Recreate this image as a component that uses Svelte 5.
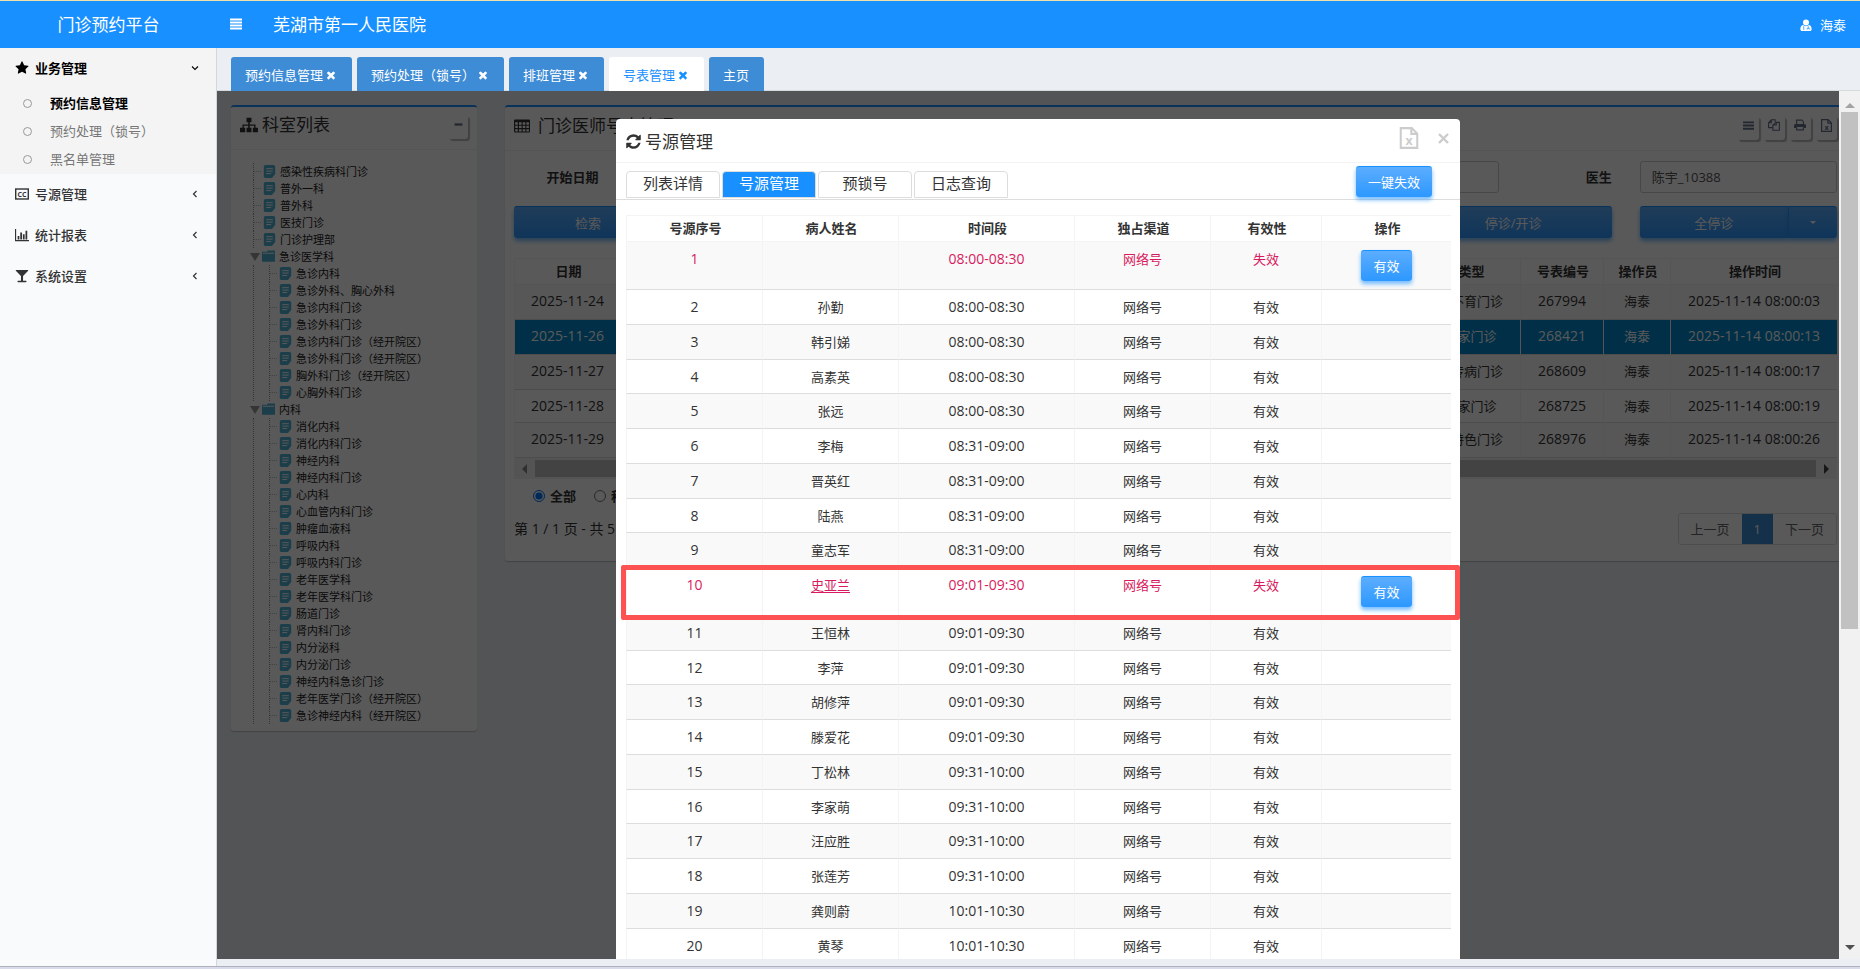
<script lang="ts">
  type Slot = { no: number; name: string; time: string; channel: string; invalid?: boolean; marked?: boolean };

  const openTabs = [
    { label: '预约信息管理', closable: true },
    { label: '预约处理（锁号）', closable: true },
    { label: '排班管理', closable: true },
    { label: '号表管理', closable: true },
    { label: '主页', closable: false }
  ];
  let currentTab = $state('号表管理');

  const subMenu = ['预约信息管理', '预约处理（锁号）', '黑名单管理'];
  const menus = [
    { icon: 'cc', label: '号源管理' },
    { icon: 'chart', label: '统计报表' },
    { icon: 'glass', label: '系统设置' }
  ];

  const tree: { name: string; children?: string[] }[] = [
    { name: '感染性疾病科门诊' },
    { name: '普外一科' },
    { name: '普外科' },
    { name: '医技门诊' },
    { name: '门诊护理部' },
    {
      name: '急诊医学科',
      children: ['急诊内科', '急诊外科、胸心外科', '急诊内科门诊', '急诊外科门诊', '急诊内科门诊（经开院区）', '急诊外科门诊（经开院区）', '胸外科门诊（经开院区）', '心胸外科门诊']
    },
    {
      name: '内科',
      children: ['消化内科', '消化内科门诊', '神经内科', '神经内科门诊', '心内科', '心血管内科门诊', '肿瘤血液科', '呼吸内科', '呼吸内科门诊', '老年医学科', '老年医学科门诊', '肠道门诊', '肾内科门诊', '内分泌科', '内分泌门诊', '神经内科急诊门诊', '老年医学门诊（经开院区）', '急诊神经内科（经开院区）']
    }
  ];

  const schedules = [
    { date: '2025-11-24', type: '男不育门诊', code: '267994', time: '2025-11-14 08:00:03' },
    { date: '2025-11-26', type: '专家门诊', code: '268421', time: '2025-11-14 08:00:13' },
    { date: '2025-11-27', type: '遗传病门诊', code: '268609', time: '2025-11-14 08:00:17' },
    { date: '2025-11-28', type: '专家门诊', code: '268725', time: '2025-11-14 08:00:19' },
    { date: '2025-11-29', type: '科特色门诊', code: '268976', time: '2025-11-14 08:00:26' }
  ];
  let selected = $state('268421');

  const people = ['', '孙勤', '韩引娣', '高素英', '张远', '李梅', '晋英红', '陆燕', '童志军', '史亚兰', '王恒林', '李萍', '胡修萍', '滕爱花', '丁松林', '李家萌', '汪应胜', '张莲芳', '龚则蔚', '黄琴'];
  const periods: [number, string][] = [
    [5, '08:00-08:30'],
    [9, '08:31-09:00'],
    [14, '09:01-09:30'],
    [18, '09:31-10:00'],
    [20, '10:01-10:30']
  ];
  const slots: Slot[] = people.map((name, i) => ({
    no: i + 1,
    name,
    time: periods.find(([last]) => i + 1 <= last)![1],
    channel: '网络号',
    invalid: i === 0 || i === 9,
    marked: i === 9
  }));

  const modalTabs = ['列表详情', '号源管理', '预锁号', '日志查询'];
  let modalTab = $state('号源管理');
</script>

{#snippet icon(name: string, size: number)}
  <svg class="icon" width={size} height={size} viewBox="0 0 16 16" fill="currentColor" aria-hidden="true">
    {#if name === 'bars'}
      <path d="M0 .6h16v2.800H0zM0 4.600h16v2.800H0zM0 8.600h16v2.800H0zM0 12.600h16v2.800H0z" />
    {:else if name === 'list'}
      <path d="M0 2h16v2.600H0zM0 6.700h16v2.600H0zM0 11.400h16v2.600H0z" />
    {:else if name === 'user'}
      <circle cx="8" cy="4.500" r="4" />
      <path d="M4 8C1.500 8.500.5 11 .5 13.500c0 1.500 1 2.500 2.500 2.500h10c1.500 0 2.500-1 2.500-2.500C15.500 11 14.500 8.500 12 8c-2 2-6 2-8 0z" />
      <path d="M5 9.500v5M11 9.500v3M9.500 14v-1.500h3V14" fill="none" stroke="#1890ff" />
    {:else if name === 'star'}
      <path transform="scale(.00893)" d="M1728 647q0 22-26 48l-363 354 86 500q1 7 1 20 0 21-10.500 35.500t-30.500 14.500q-19 0-40-12l-449-236-449 236q-22 12-40 12-21 0-31.500-14.500t-10.500-35.500q0-6 2-20l86-500-364-354q-25-27-25-48 0-37 56-46l502-73 225-455q19-41 49-41t49 41l225 455 502 73q56 9 56 46z" />
    {:else if name === 'cc'}
      <rect x=".8" y="2.300" width="14.400" height="11.400" fill="none" stroke="currentColor" stroke-width="1.600" />
      <text x="8" y="11" font-size="8" font-weight="700" text-anchor="middle">CC</text>
    {:else if name === 'chart'}
      <path d="M0 1h1.300v12.700H16V15H0zM3 9h2v4H3zM6 5h2v8H6zM9 7h2v6H9zM12 3h2v10h-2z" />
    {:else if name === 'glass'}
      <path d="M1.500 1h13c.8 0 .8.800.3 1.300L9.200 8v5.500h3.300c1 0 1 1.500 0 1.500h-9c-1 0-1-1.500 0-1.500h3.300V8L1.200 2.300C.7 1.800.7 1 1.500 1z" />
    {:else if name === 'down'}
      <path d="M2 5l6 6 6-6" fill="none" stroke="currentColor" stroke-width="2.200" />
    {:else if name === 'left'}
      <path d="M11 2L5 8l6 6" fill="none" stroke="currentColor" stroke-width="2.400" />
    {:else if name === 'times'}
      <path transform="scale(.00893)" d="M1490 1322q0 40-28 68l-136 136q-28 28-68 28t-68-28l-294-294-294 294q-28 28-68 28t-68-28l-136-136q-28-28-28-68t28-68l294-294-294-294q-28-28-28-68t28-68l136-136q28-28 68-28t68 28l294 294 294-294q28-28 68-28t68 28l136 136q28 28 28 68t-28 68l-294 294 294 294q28 28 28 68z" />
    {:else if name === 'sitemap'}
      <path d="M5.800 1.500h4.400v4H8.700v2h5.100v3H16v4h-4.600v-4h1.200V8.700H8.700v1.800h1.500v4H5.800v-4h1.500V8.700H3.400v1.800h1.200v4H0v-4h2.200v-3h5.100v-2H5.800z" />
    {:else if name === 'table'}
      <path fill-rule="evenodd" d="M1 1.500h14q1 0 1 1v11q0 1-1 1H1q-1 0-1-1v-11q0-1 1-1zM1.200 4.300v2.400h2.600V4.300zM5 4.300v2.400h2.600V4.300zM8.700 4.300v2.400h2.600V4.300zM12.400 4.300v2.400h2.500V4.300zM1.200 7.800v2.300h2.600V7.800zM5 7.800v2.300h2.600V7.800zM8.700 7.800v2.300h2.600V7.800zM12.400 7.800v2.300h2.500V7.800zM1.200 11.200v2.200h2.600v-2.200zM5 11.200v2.200h2.600v-2.200zM8.700 11.200v2.200h2.600v-2.200zM12.400 11.200v2.200h2.500v-2.200z" />
    {:else if name === 'minus'}
      <path d="M1 6h14v4H1z" />
    {:else if name === 'copy'}
      <path d="M6 11.500H.8V5L4.500 1h5v3M4.500 1v4H.8M11 4.500h4.200V15H6.500V8zM11 4.500V8H6.500" fill="none" stroke="currentColor" stroke-width="1.500" />
    {:else if name === 'print'}
      <path d="M3.500 7V1.500h7l2 2V7M3.500 11v3.500h9V11" fill="none" stroke="currentColor" stroke-width="1.500" />
      <path d="M2 6.500h12q2 0 2 2V12h-3v-1.500H3V12H0V8.500q0-2 2-2z" />
    {:else if name === 'excel'}
      <path d="M2 .8h8L14 4.800v10.400H2zM9.700.8v4.200H14" fill="none" stroke="currentColor" stroke-width="1.500" />
      <text x="8" y="13" font-size="9" font-weight="700" text-anchor="middle">x</text>
    {:else if name === 'refresh'}
      <path transform="scale(.00893)" d="M1639 1056q0 5-1 7-64 268-268 434.500t-478 166.500q-146 0-282.500-55t-243.500-157l-129 129q-19 19-45 19t-45-19-19-45v-448q0-26 19-45t45-19h448q26 0 45 19t19 45-19 45l-137 137q71 66 161 102t187 36q134 0 250-65t186-179q11-17 53-117 8-23 30-23h192q13 0 22.500 9.500t9.500 22.500zm25-800v448q0 26-19 45t-45 19h-448q-26 0-45-19t-19-45 19-45l138-138q-148-137-349-137-134 0-250 65t-186 179q-11 17-53 117-8 23-30 23h-199q-13 0-22.500-9.500t-9.500-22.500v-7q65-268 270-434.500t480-166.500q146 0 284 55.500t245 156.500l130-129q19-19 45-19t45 19 19 45z" />
    {:else if name === 'file'}
      <path d="M3 0h10q2 0 2 2v9l-4 5H3q-2 0-2-2V2q0-2 2-2z" />
      <path d="M4 4.500h8M4 7.500h8M4 10.500h6" stroke="#fff" stroke-width="1.200" />
    {:else if name === 'folder'}
      <path d="M0 2h6l1-1.500h9V14.500H0z" />
      <path d="M1 4h14" stroke="#fff" stroke-width="1.200" />
    {/if}
  </svg>
{/snippet}

{#snippet leaf(name: string)}
  <li><a href="#dept" class="node"><i class="branch"></i><span class="leaf-icon">{@render icon('file', 13)}</span>{name}</a></li>
{/snippet}

<div class="app">
  <header>
    <a href="#home" class="brand">门诊预约平台</a>
    <button class="toggle" aria-label="折叠菜单">{@render icon('bars', 12)}</button>
    <span class="hospital">芜湖市第一人民医院</span>
    <a href="#user" class="user">{@render icon('user', 12)}海泰</a>
  </header>

  <div class="body">
    <aside>
      <nav>
        <section class="group open">
          <button class="group-head">{@render icon('star', 14)}<span>业务管理</span>{@render icon('down', 8)}</button>
          <ul>
            {#each subMenu as item, i}
              <li><a href="#menu" class:active={i === 0}><i class="dot"></i>{item}</a></li>
            {/each}
          </ul>
        </section>
        {#each menus as m}
          <section class="group">
            <button class="group-head">{@render icon(m.icon, 14)}<span>{m.label}</span>{@render icon('left', 8)}</button>
          </section>
        {/each}
      </nav>
    </aside>

    <main>
      <div class="tabs">
        {#each openTabs as t}
          <button class="tab" class:active={currentTab === t.label} onclick={() => (currentTab = t.label)}>
            {t.label}{#if t.closable}{@render icon('times', 12)}{/if}
          </button>
        {/each}
      </div>

      <div class="viewport">
        <div class="page">
          <section class="panel depts">
            <div class="panel-head">
              {@render icon('sitemap', 18)}
              <h2>科室列表</h2>
              <div class="tools"><button aria-label="收起">{@render icon('minus', 9)}</button></div>
            </div>
            <ul class="tree">
              {#each tree as node}
                {#if node.children}
                  <li>
                    <a href="#dept" class="node"><i class="arrow"></i>{@render icon('folder', 13)}{node.name}</a>
                    <ul>
                      {#each node.children as child}{@render leaf(child)}{/each}
                    </ul>
                  </li>
                {:else}
                  {@render leaf(node.name)}
                {/if}
              {/each}
            </ul>
          </section>

          <section class="panel work">
            <div class="panel-head">
              {@render icon('table', 16)}
              <h2>门诊医师号表管理</h2>
              <div class="tools">
                <button aria-label="列表">{@render icon('list', 11)}</button>
                <button aria-label="复制">{@render icon('copy', 12)}</button>
                <button aria-label="打印">{@render icon('print', 12)}</button>
                <button aria-label="导出">{@render icon('excel', 13)}</button>
              </div>
            </div>
            <div class="work-body">
              <div class="filters">
                <label for="start">开始日期</label><input id="start" value="2025-11-14" />
                <label for="end">结束日期</label><input id="end" value="2025-11-30" />
                <label for="dept">科室</label><input id="dept" value="" />
                <label for="doctor">医生</label><input id="doctor" value="陈宇_10388" />
              </div>
              <div class="actions">
                <div class="split"><button class="btn">检索</button><button class="btn caret" aria-label="更多"></button></div>
                <button class="btn stop">停诊/开诊</button>
                <div class="split"><button class="btn">全停诊</button><button class="btn caret" aria-label="更多"></button></div>
              </div>

              <table class="schedule">
                <colgroup><col class="c-date" /><col /><col class="c-type" /><col class="c-code" /><col class="c-op" /><col class="c-time" /></colgroup>
                <thead>
                  <tr><th>日期</th><th></th><th>类型</th><th>号表编号</th><th>操作员</th><th>操作时间</th></tr>
                </thead>
                <tbody>
                  {#each schedules as s}
                    <tr class:selected={selected === s.code} onclick={() => (selected = s.code)}>
                      <td class="num">{s.date}</td>
                      <td></td>
                      <td>{s.type}</td>
                      <td class="num">{s.code}</td>
                      <td>海泰</td>
                      <td class="num">{s.time}</td>
                    </tr>
                  {/each}
                </tbody>
              </table>
              <div class="hscroll"><i class="tri-left"></i><span></span><i class="tri-right"></i></div>

              <div class="radios">
                <label><input type="radio" name="kind" checked />全部</label>
                <label><input type="radio" name="kind" />科室</label>
              </div>
              <div class="pager">
                <span class="num">第 1 / 1 页 - 共 5 条</span>
                <div class="pages"><button>上一页</button><button class="current">1</button><button>下一页</button></div>
              </div>
            </div>
          </section>
        </div>

        <div class="overlay">
          <div class="modal" role="dialog" aria-label="号源管理">
            <div class="modal-head">
              {@render icon('refresh', 17)}
              <h2>号源管理</h2>
              <button class="export" aria-label="导出">{@render icon('excel', 22)}</button>
              <button class="close" aria-label="关闭">
                <svg width="11" height="11" viewBox="0 0 11 11"><path d="M1 1l9 9M10 1l-9 9" stroke="currentColor" stroke-width="2.400" /></svg>
              </button>
            </div>
            <div class="modal-bar">
              {#each modalTabs as t}
                <button class="modal-tab" class:active={modalTab === t} onclick={() => (modalTab = t)}>{t}</button>
              {/each}
              <button class="btn small void-all">一键失效</button>
            </div>
            <table class="slots">
              <colgroup><col class="w1" /><col class="w1" /><col class="w2" /><col class="w1" /><col class="w3" /><col class="w4" /></colgroup>
              <thead>
                <tr><th>号源序号</th><th>病人姓名</th><th>时间段</th><th>独占渠道</th><th>有效性</th><th>操作</th></tr>
              </thead>
              <tbody>
                {#each slots as s}
                  <tr class:invalid={s.invalid} class:marked={s.marked}>
                    <td class="num">{s.no}</td>
                    <td>{#if s.marked}<a href="#patient">{s.name}</a>{:else}{s.name}{/if}</td>
                    <td class="num">{s.time}</td>
                    <td>{s.channel}</td>
                    <td>{s.invalid ? '失效' : '有效'}</td>
                    <td>{#if s.invalid}<button class="btn small">有效</button>{/if}</td>
                  </tr>
                {/each}
              </tbody>
            </table>
          </div>
        </div>

        <div class="vscroll"><i class="tri-up"></i><span></span><i class="tri-down"></i></div>
      </div>
    </main>
  </div>
  <footer></footer>
</div>

<style>
  .app {
    box-sizing: border-box;
    height: 100vh;
    display: flex;
    flex-direction: column;
    border-top: 1px solid #f0dfa6;
    background: #ebeff4;
    color: #333;
    font: 13px/18px "Open Sans", "Noto Sans CJK SC", sans-serif;
  }
  .app :global(*) { box-sizing: border-box; }
  button, input { font: inherit; color: inherit; }
  button { border: 0; background: none; padding: 0; cursor: pointer; }
  a { color: inherit; text-decoration: none; }
  ul { list-style: none; margin: 0; padding: 0; }
  h2 { margin: 0; font-size: 17px; font-weight: 400; line-height: 24px; }
  .icon { flex: none; display: block; }

  header {
    flex: none;
    height: 47px;
    display: flex;
    align-items: center;
    background: #1890ff;
    color: #fff;
    font-size: 17px;
  }
  .brand { width: 217px; text-align: center; }
  .toggle { padding: 0 12px 2px 13px; }
  .hospital { margin-left: 19px; }
  .user { margin-left: auto; margin-right: 14px; display: flex; align-items: center; gap: 8px; font-size: 13px; }

  .body { flex: 1; min-height: 0; display: flex; }
  aside { flex: none; width: 217px; background: #f9fafc; border-right: 1px solid #d2d6de; }
  .group-head {
    width: 100%;
    height: 41px;
    padding: 0 17px 2px 15px;
    display: flex;
    align-items: center;
    gap: 6px;
    color: #333;
    font-weight: 500;
    text-align: left;
  }
  .group-head span { flex: 1; }
  .open { background: #f4f4f4; padding-bottom: 1px; }
  .open .group-head { color: #000; font-weight: 700; }
  .group li a { display: flex; align-items: center; height: 28px; padding-left: 23px; color: #777; }
  .group li a.active { color: #000; font-weight: 700; }
  .dot { width: 9px; height: 9px; margin-right: 18px; border: 1px solid #999; border-radius: 50%; }

  main { flex: 1; min-width: 0; display: flex; flex-direction: column; padding-bottom: 7px; }
  .tabs { flex: none; height: 43px; padding: 9px 14px 0; display: flex; gap: 5px; border-bottom: 1px solid #d5dadd; }
  .tab {
    display: flex;
    align-items: center;
    gap: 2px;
    height: 34px;
    padding: 2px 15px 0 14px;
    border-radius: 3px 3px 0 0;
    background: #3e8cd5;
    color: #fff;
  }
  .tab.active { background: #fff; color: #1890ff; }

  .viewport { position: relative; flex: 1; min-height: 0; overflow: hidden; }
  .page { display: flex; align-items: flex-start; gap: 28px; padding: 14px; }
  .panel { background: #fff; border-top: 2px solid #1890ff; border-radius: 3px; box-shadow: 0 1px 1px rgba(0, 0, 0, 0.2); }
  .depts { flex: none; width: 246px; }
  .work { flex: 1; min-width: 0; }
  .panel-head { display: flex; align-items: center; gap: 4px; height: 43px; padding: 0 9px 6px; border-bottom: 1px solid #f0f0f0; }
  .work .panel-head { height: 44px; gap: 8px; }
  .tools { margin-left: auto; display: flex; gap: 4px; }
  .tools button {
    width: 20px;
    height: 24px;
    margin-top: 4px;
    padding: 0 0 5px;
    display: grid;
    place-items: center;
    color: #66728a;
    border-radius: 3px;
    box-shadow: 2px 2px 1px #bbb;
  }
  .work .tools button { width: 22px; }

  .tree { padding: 13px 0 7px 19px; font-size: 11px; line-height: 17px; color: #222; }
  .tree ul { margin-left: 3px; padding-left: 12px; border-left: 1px dotted #999; }
  .node { display: flex; align-items: center; height: 17px; gap: 4px; }
  .node :global(.icon) { color: #4fb3d4; }
  .branch { width: 11px; height: 17px; margin-left: 3px; border-left: 1px dotted #999; background: repeating-linear-gradient(90deg, #bbb 0 1px, transparent 1px 2px) 0 8px / 8px 1px no-repeat; }
  .leaf-icon { margin-left: -5px; }
  .arrow { width: 0; border: 5px solid transparent; border-top: 8px solid #999; border-bottom: 0; margin-right: -2px; }

  .work-body { padding: 10px 9px 16px; }
  .filters { display: grid; grid-template-columns: repeat(12, minmax(0, 1fr)); gap: 28px; align-items: center; }
  .filters label { text-align: right; font-weight: 700; }
  .filters input { grid-column: span 2; width: 100%; height: 32px; padding: 0 11px 2px; border: 1px solid #ccc; border-radius: 3px; background: #fff; color: #555; }
  .actions { display: grid; grid-template-columns: repeat(6, minmax(0, 1fr)); gap: 28px; padding: 13px 0 20px; }
  .stop { grid-column: 5; }
  .split { display: grid; grid-template-columns: 3fr 1fr; }
  .split .btn:first-child { border-radius: 3px 0 0 3px; }
  .split .caret { border-radius: 0 3px 3px 0; border-left: 1px solid #2f93f5; display: grid; place-items: center; }
  .caret::after { content: ''; border: 3px solid transparent; border-top-color: #fff; border-bottom: 0; }
  .btn {
    height: 32px;
    color: #fff;
    border-top: 1px solid #1890ff;
    border-radius: 3px;
    background: linear-gradient(#5cadff, #2d98ff);
    box-shadow: 0 3px 4px rgba(24, 144, 255, 0.6);
  }
  .small { height: 31px; padding: 0 12px; }

  table { width: 100%; border-collapse: separate; border-spacing: 0; table-layout: fixed; }
  th, td { text-align: center; vertical-align: top; }
  th { height: 27px; padding: 3px 0 4px 2px; border-top: 1px solid #f4f4f4; border-left: 1px solid #f4f4f4; border-bottom: 1px solid #f4f4f4; font-weight: 700; }
  td { padding: 8px 0; border-left: 1px solid #f4f4f4; border-bottom: 1px solid #ddd; }
  tbody tr:nth-child(odd) { background: #f9f9f9; }
  tbody tr:nth-child(4n + 4) td { padding-bottom: 7px; }
  .num { font-size: 14px; }
  .c-date { width: 106px; }
  .c-type { width: 100px; }
  .c-code { width: 83px; }
  .c-op { width: 67px; }
  .c-time { width: 167px; }
  .schedule td { padding-top: 7px; }
  tbody tr.selected { background: #0088cc; color: #fff; }
  .schedule td { padding-bottom: 9px; }
  .hscroll { display: flex; align-items: center; gap: 8px; height: 21px; padding: 0 8px; background: #f1f1f1; }
  .hscroll span { flex: 1; height: 17px; background: #c1c1c1; }
  .tri-left, .tri-right { border: 5px solid transparent; }
  .tri-left { border-right-color: #888; border-left: 0; }
  .tri-right { border-left-color: #444; border-right: 0; }
  .radios { display: flex; gap: 18px; padding: 8px 0; padding-left: 19px; font-weight: 700; }
  .radios label { display: flex; align-items: center; gap: 5px; }
  .radios input { width: 12px; height: 12px; margin: 0; }
  .pager { display: flex; justify-content: space-between; align-items: center; }
  .pages { display: flex; border: 1px solid #ddd; border-radius: 3px; }
  .pages button { height: 30px; padding: 0 12px; color: #666; }
  .pages .current { background: #3e8cd5; color: #fff; }

  .overlay { position: absolute; inset: 0; display: flex; justify-content: center; align-items: flex-start; padding: 28px 1px 0 0; background: rgba(0, 0, 0, 0.65); }
  .modal { width: 844px; background: #fff; border-radius: 4px; padding-bottom: 20px; }
  .modal-head { display: flex; align-items: center; height: 44px; padding: 2px 11px 0 9px; border-bottom: 1px solid #f4f4f4; }
  .modal-head h2 { margin-left: 3px; }
  .export { margin: 0 18px 8px auto; color: #ccc; }
  .close { display: grid; color: #ccc; margin-bottom: 6px; }
  .modal-bar { display: flex; align-items: flex-end; gap: 2px; height: 37px; padding: 0 28px 1px 10px; border-bottom: 1px solid #ddd; }
  .modal-tab { width: 94px; height: 27px; padding-bottom: 4px; border: 1px solid #ddd; border-radius: 4px 4px 0 0; font-size: 15px; line-height: 20px; }
  .modal-tab.active { background: #1890ff; color: #fff; }
  .void-all { margin-left: auto; margin-bottom: 1px; }
  .slots { width: auto; margin: 15px 9px 0 10px; min-width: calc(100% - 19px); }
  .w1 { width: 136px; }
  .w2 { width: 176px; }
  .w3 { width: 111px; }
  .w4 { width: 130px; }
  .invalid { color: #d81b60; }
  .invalid a { text-decoration: underline; text-underline-offset: 2px; }
  .marked { position: relative; }
  .marked::after { content: ''; position: absolute; inset: -3px -9px -4px -5px; border: 5px solid #fd5252; border-radius: 2px; pointer-events: none; }

  .vscroll { position: absolute; inset: 0 0 0 auto; width: 21px; display: flex; flex-direction: column; align-items: center; padding: 12px 0 9px; background: #f1f1f1; }
  .vscroll span { width: 17px; height: 61%; margin-top: 4px; background: #c1c1c1; }
  .tri-up, .tri-down { border: 5px solid transparent; }
  .tri-up { border-bottom-color: #a3a3a3; border-top: 0; }
  .tri-down { border-top-color: #505050; border-bottom: 0; margin-top: auto; }

  footer { flex: none; height: 3px; border-top: 1px solid #b0b1bd; background: #d8dbea; }
</style>
